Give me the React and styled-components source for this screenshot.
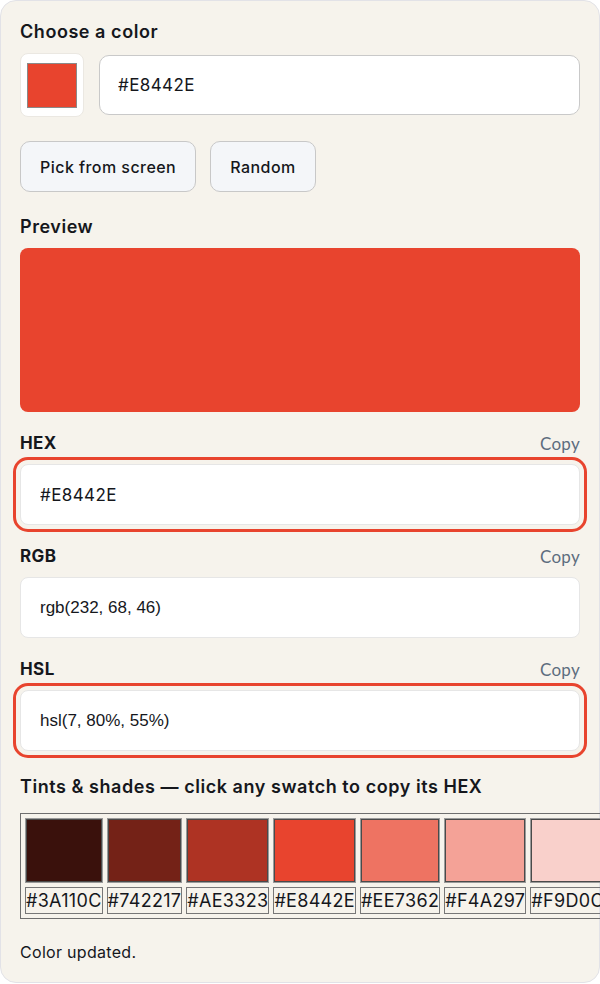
import React, { useState } from 'react'
import styled, { createGlobalStyle } from 'styled-components'

const GlobalStyle = createGlobalStyle`
  html, body {
    margin: 0;
    padding: 0;
    background: #ffffff;
    overflow: hidden;
  }
  body {
    font-family: Inter, "Noto Sans", sans-serif;
    color: #15171c;
  }
`

const SHADES = ['#3A110C', '#742217', '#AE3323', '#E8442E', '#EE7362', '#F4A297', '#F9D0CB']

export default function App() {
  const [hex] = useState('#E8442E')

  return (
    <>
      <GlobalStyle />
      <Card>
        <Title>Choose a color</Title>
        <PickerRow>
          <SwatchWell>
            <SwatchChip $color={hex} />
          </SwatchWell>
          <HexInput value={hex} readOnly />
        </PickerRow>

        <ButtonRow>
          <Button>Pick from screen</Button>
          <Button>Random</Button>
        </ButtonRow>

        <Title $gap={23}>Preview</Title>
        <PreviewBox $color={hex} />

        <FieldGroup label="HEX" value="#E8442E" ring mono />
        <FieldGroup label="RGB" value="rgb(232, 68, 46)" />
        <FieldGroup label="HSL" value="hsl(7, 80%, 55%)" ring />

        <Title $gap={24}>Tints &amp; shades — click any swatch to copy its HEX</Title>
        <ShadeTable>
          <tbody>
            <tr>
              {SHADES.map(c => (
                <ShadeCell key={c}>
                  <ShadeSwatch style={{ background: c }} />
                </ShadeCell>
              ))}
            </tr>
            <tr>
              {SHADES.map(c => (
                <ShadeLabel key={c}>{c}</ShadeLabel>
              ))}
            </tr>
          </tbody>
        </ShadeTable>

        <Status>Color updated.</Status>
      </Card>
    </>
  )
}

function FieldGroup({ label, value, ring, mono }) {
  return (
    <Group>
      <LabelRow>
        <FieldLabel>{label}</FieldLabel>
        <CopyLink>Copy</CopyLink>
      </LabelRow>
      <ValueInput value={value} readOnly $ring={ring} $mono={mono} />
    </Group>
  )
}

const Card = styled.div`
  box-sizing: border-box;
  width: 600px;
  height: 983px;
  padding: 19px 19px 19px;
  background: #f6f3ec;
  border: 1px solid #e2e2e7;
  border-radius: 16px;
  display: flex;
  flex-direction: column;
`

const Title = styled.div`
  font-size: 18px;
  font-weight: 600;
  line-height: 24px;
  letter-spacing: 0.55px;
  margin-top: ${p => (p.$gap ? `${p.$gap}px` : '0')};
`

const PickerRow = styled.div`
  display: flex;
  align-items: center;
  gap: 15px;
  margin-top: 9px;
`

const SwatchWell = styled.div`
  box-sizing: border-box;
  width: 64px;
  height: 64px;
  background: #ffffff;
  border: 1px solid #ebe8e2;
  border-radius: 8px;
  display: flex;
  align-items: center;
  justify-content: center;
`

const SwatchChip = styled.div`
  box-sizing: border-box;
  width: 50px;
  height: 45px;
  background: ${p => p.$color};
  border: 1px solid #8a8a8a;
`

const HexInput = styled.input`
  box-sizing: border-box;
  flex: 1;
  height: 60px;
  padding: 0 18px;
  font-family: Inter, sans-serif;
  font-size: 17px;
  letter-spacing: 0.4px;
  color: #15171c;
  background: #ffffff;
  border: 1px solid #c9c9c9;
  border-radius: 10px;
  outline: none;
`

const ButtonRow = styled.div`
  display: flex;
  gap: 14px;
  margin-top: 24px;
`

const Button = styled.button`
  box-sizing: border-box;
  height: 51px;
  padding: 0 19px;
  font-family: Inter, sans-serif;
  font-size: 16px;
  font-weight: 500;
  letter-spacing: 0.45px;
  color: #15171c;
  background: #f4f6f9;
  border: 1px solid #c8c8c8;
  border-radius: 10px;
  cursor: pointer;
`

const PreviewBox = styled.div`
  height: 164px;
  margin-top: 9px;
  background: ${p => p.$color};
  border-radius: 8px;
`

const Group = styled.div`
  display: flex;
  flex-direction: column;
  margin-top: 19px;
`

const LabelRow = styled.div`
  display: flex;
  justify-content: space-between;
  align-items: center;
  height: 24px;
`

const FieldLabel = styled.span`
  font-size: 17px;
  font-weight: 700;
  letter-spacing: 0.4px;
`

const CopyLink = styled.span`
  font-family: Lato, "Open Sans", sans-serif;
  font-size: 17px;
  letter-spacing: 0.3px;
  color: #5d6d7e;
  cursor: pointer;
`

const ValueInput = styled.input`
  box-sizing: border-box;
  height: 61px;
  margin-top: 9px;
  padding: 0 19px;
  font-family: ${p => (p.$mono ? 'Inter, sans-serif' : '"Liberation Sans", Arial, sans-serif')};
  font-size: 17px;
  letter-spacing: ${p => (p.$mono ? '0.4px' : '0')};
  color: #15171c;
  background: #ffffff;
  border: 1px solid #e6e6e6;
  border-radius: 8px;
  outline: ${p => (p.$ring ? '3px solid #e8442e' : 'none')};
  outline-offset: 4px;
`

const ShadeTable = styled.table`
  margin-top: 14px;
  width: max-content;
  border: 1px solid #6e6e6e;
  border-spacing: 4px;
  flex-shrink: 0;
`

const ShadeCell = styled.td`
  padding: 0;
  border: 1px solid #9a9a9a;
`

const ShadeSwatch = styled.div`
  box-sizing: border-box;
  height: 63px;
  border: 1px solid #4a4a4a;
  cursor: pointer;
`

const ShadeLabel = styled.td`
  padding: 0;
  font-family: Inter, sans-serif;
  font-size: 18px;
  line-height: 25px;
  letter-spacing: 0.3px;
  white-space: nowrap;
  border: 1px solid #777777;
`

const Status = styled.div`
  font-size: 16px;
  line-height: 20px;
  letter-spacing: 0.3px;
  margin-top: 23px;
`
